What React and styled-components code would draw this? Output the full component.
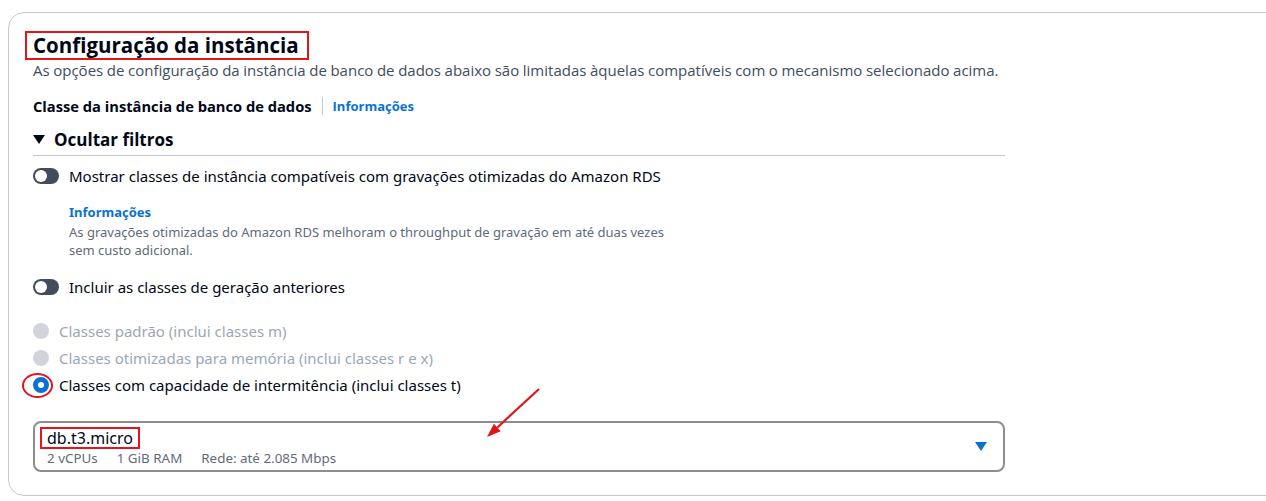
import React from 'react';
import styled, { createGlobalStyle } from 'styled-components';

const Global = createGlobalStyle`
  html, body { margin: 0; padding: 0; background: #fff; }
  body { font-family: "Open Sans", "Noto Sans", sans-serif; color: #000716; overflow: hidden; }
`;

const Panel = styled.section`
  position: relative;
  margin: 12px 0 0 8px;
  width: 1290px;
  height: 484px;
  box-sizing: border-box;
  border: 1px solid #c6c6cd;
  border-radius: 16px;
  padding: 18px 0 0 24px;
`;

const TitleBox = styled.div`
  display: inline-block;
  margin-left: -8px;
  padding: 0 8px 0 6px;
  border: 2px solid #e0161b;
  height: 25px;
`;

const Title = styled.h2`
  margin: 0;
  font-size: 20.5px;
  line-height: 25px;
  font-weight: 700;
`;

const Description = styled.p`
  margin: 0;
  font-size: 15px;
  word-spacing: -0.3px;
  line-height: 20px;
  color: #414d5c;
`;

const LabelRow = styled.div`
  display: flex;
  align-items: center;
  margin-top: 16px;
  height: 20px;
  font-size: 14.7px;
  font-weight: 700;
`;

const Divider = styled.span`
  width: 1px;
  height: 18px;
  background: #c6c6cd;
  margin: 0 10px;
`;

const InfoLink = styled.a`
  color: #0972d3;
  font-weight: 700;
  font-size: 13px;
  text-decoration: none;
`;

const Expander = styled.div`
  display: flex;
  align-items: center;
  gap: 9px;
  margin-top: 11px;
  width: 972px;
  height: 24px;
  padding-bottom: 4px;
  border-bottom: 1px solid #c6c6cd;
  font-size: 17px;
  font-weight: 700;
`;

const Caret = styled.span`
  width: 0;
  height: 0;
  border-left: 6px solid transparent;
  border-right: 6px solid transparent;
  border-top: 9px solid #000716;
  margin-top: 1px;
`;

const ToggleRow = styled.div`
  display: flex;
  align-items: center;
  gap: 10px;
  margin-top: ${p => p.$top}px;
  font-family: "Noto Sans", sans-serif;
  font-stretch: condensed;
  font-size: 15px;
  height: 20px;
`;

const Toggle = styled.span`
  position: relative;
  width: 26px;
  height: 16px;
  border-radius: 8px;
  background: #414d5c;
  flex: none;
  &::after {
    content: "";
    position: absolute;
    left: 2px;
    top: 2px;
    width: 12px;
    height: 12px;
    border-radius: 50%;
    background: #fff;
  }
`;

const Hint = styled.div`
  margin: 17px 0 0 36px;
  font-family: "Noto Sans", sans-serif;
  font-stretch: condensed;
  display: flex;
  flex-direction: column;
`;

const HintText = styled.p`
  margin: 2px 0 0;
  width: 620px;
  font-size: 13px;
  line-height: 18px;
  color: #5f6b7a;
`;

const RadioGroup = styled.div`
  display: flex;
  flex-direction: column;
  gap: 7px;
  margin-top: 24px;
`;

const RadioRow = styled.label`
  display: flex;
  align-items: center;
  gap: 10px;
  height: 20px;
  font-family: "Noto Sans", sans-serif;
  font-stretch: condensed;
  font-size: 15px;
  color: ${p => p.$disabled ? '#9ba7b6' : '#000716'};
`;

const Radio = styled.span`
  width: 16px;
  height: 16px;
  border-radius: 50%;
  flex: none;
  box-sizing: border-box;
  background: ${p => p.$checked ? '#fff' : '#d1d5db'};
  border: ${p => p.$checked ? '5px solid #0972d3' : 'none'};
`;

const Ring = styled.span`
  position: absolute;
  left: -11px;
  top: -4px;
  width: 27px;
  height: 21px;
  border: 2px solid #e0161b;
  border-radius: 50%;
`;

const RadioWrap = styled.span`
  position: relative;
  display: flex;
`;

const Select = styled.div`
  display: flex;
  align-items: center;
  justify-content: space-between;
  margin-top: 26px;
  width: 972px;
  height: 51px;
  box-sizing: border-box;
  border: 2px solid #8c8c94;
  border-radius: 8px;
  padding: 0 16px 0 12px;
  font-family: "Noto Sans", sans-serif;
  font-stretch: condensed;
`;

const SelectText = styled.div`
  display: flex;
  flex-direction: column;
`;

const ValueBox = styled.span`
  align-self: flex-start;
  margin-left: -7px;
  padding: 0 5px;
  border: 2px solid #e0161b;
  font-size: 16px;
  line-height: 18px;
  color: #000716;
`;

const Meta = styled.div`
  display: flex;
  gap: 19px;
  font-size: 13.4px;
  line-height: 18px;
  color: #5f6b7a;
`;

const DropCaret = styled.span`
  width: 0;
  height: 0;
  border-left: 6px solid transparent;
  border-right: 6px solid transparent;
  border-top: 9px solid #0972d3;
`;

const Arrow = styled.svg`
  position: absolute;
  left: 470px;
  top: 370px;
  pointer-events: none;
`;

export default function App() {
  return (
    <>
      <Global />
      <Panel>
        <TitleBox>
          <Title>Configuração da instância</Title>
        </TitleBox>
        <Description>
          As opções de configuração da instância de banco de dados abaixo são limitadas àquelas compatíveis com o mecanismo selecionado acima.
        </Description>
        <LabelRow>
          Classe da instância de banco de dados
          <Divider />
          <InfoLink href="#">Informações</InfoLink>
        </LabelRow>
        <Expander>
          <Caret />
          Ocultar filtros
        </Expander>
        <ToggleRow $top={10}>
          <Toggle />
          Mostrar classes de instância compatíveis com gravações otimizadas do Amazon RDS
        </ToggleRow>
        <Hint>
          <InfoLink href="#">Informações</InfoLink>
          <HintText>
            As gravações otimizadas do Amazon RDS melhoram o throughput de gravação em até duas vezes sem custo adicional.
          </HintText>
        </Hint>
        <ToggleRow $top={18}>
          <Toggle />
          Incluir as classes de geração anteriores
        </ToggleRow>
        <RadioGroup>
          <RadioRow $disabled>
            <Radio />
            Classes padrão (inclui classes m)
          </RadioRow>
          <RadioRow $disabled>
            <Radio />
            Classes otimizadas para memória (inclui classes r e x)
          </RadioRow>
          <RadioRow>
            <RadioWrap>
              <Radio $checked />
              <Ring />
            </RadioWrap>
            Classes com capacidade de intermitência (inclui classes t)
          </RadioRow>
        </RadioGroup>
        <Select>
          <SelectText>
            <ValueBox>db.t3.micro</ValueBox>
            <Meta>
              <span>2 vCPUs</span>
              <span>1 GiB RAM</span>
              <span>Rede: até 2.085 Mbps</span>
            </Meta>
          </SelectText>
          <DropCaret />
        </Select>
        <Arrow width="80" height="70" viewBox="0 0 80 70">
          <line x1="60" y1="6" x2="18.3" y2="44.5" stroke="#e0161b" strokeWidth="2.2" />
          <polygon points="8,54 21.7,48.2 14.9,40.8" fill="#e0161b" />
        </Arrow>
      </Panel>
    </>
  );
}
